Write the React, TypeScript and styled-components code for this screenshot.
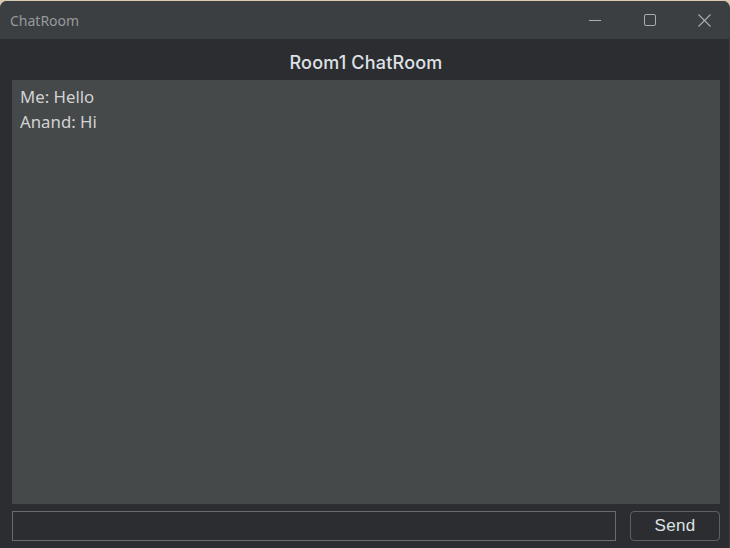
import React from "react";
import styled, { createGlobalStyle } from "styled-components";

const Global = createGlobalStyle`
  html, body { margin: 0; padding: 0; background: #d9c9b1; }
  body { width: 730px; height: 548px; overflow: hidden; }
`;

const Window = styled.div`
  margin-top: 1px;
  width: 730px;
  height: 547px;
  display: flex;
  flex-direction: column;
  background: #2b2d30;
  border-radius: 7px 7px 0 0;
  overflow: hidden;
  box-sizing: border-box;
  border-right: 1px solid #3a3c40;
`;

const TitleBar = styled.div`
  height: 38px;
  flex: 0 0 38px;
  background: #3c3f41;
  display: flex;
  align-items: center;
  padding-left: 10px;
`;

const TitleText = styled.div`
  flex: 1;
  font-family: "Segoe UI", "Noto Sans", "Open Sans", sans-serif;
  font-size: 14px;
  color: #969a9e;
`;

const Controls = styled.div`
  display: flex;
  height: 100%;
  margin-right: -3px;
`;

const CtrlButton = styled.div`
  width: 55px;
  height: 100%;
  display: flex;
  align-items: center;
  justify-content: center;
  color: #a9acb0;
`;

const Body = styled.div`
  flex: 1;
  display: flex;
  flex-direction: column;
  padding: 0 9px 7px 12px;
`;

const Header = styled.div`
  height: 41px;
  display: flex;
  align-items: center;
  justify-content: center;
  font-family: "Inter", "Noto Sans", sans-serif;
  font-weight: 500;
  font-size: 18px;
  letter-spacing: 0.2px;
  color: #dfe1e5;
  padding-top: 6px;
  box-sizing: border-box;
`;

const Messages = styled.div`
  flex: 1;
  background: #45494a;
  padding: 4px 8px;
  font-family: "Segoe UI", "Noto Sans", "Open Sans", sans-serif;
  font-size: 16.8px;
  line-height: 25px;
  color: #d2d2d2;
`;

const Line = styled.div``;

const InputRow = styled.div`
  display: flex;
  gap: 14px;
  margin-top: 7px;
  height: 30px;
`;

const Input = styled.div`
  flex: 1;
  border: 1px solid #6a6b6e;
  background: #2b2d30;
`;

const SendButton = styled.div`
  width: 90px;
  box-sizing: border-box;
  border: 1px solid #5e6064;
  border-radius: 4px;
  display: flex;
  align-items: center;
  justify-content: center;
  font-family: "Liberation Sans", Arial, sans-serif;
  font-size: 17px;
  letter-spacing: 0.3px;
  color: #dfe1e5;
  background: #2b2d30;
`;

export default function App() {
  return (
    <>
      <Global />
      <Window>
        <TitleBar>
          <TitleText>ChatRoom</TitleText>
          <Controls>
            <CtrlButton>
              <svg width="12" height="12" viewBox="0 0 12 12">
                <line x1="0" y1="6.5" x2="12" y2="6.5" stroke="currentColor" strokeWidth="1" />
              </svg>
            </CtrlButton>
            <CtrlButton>
              <svg width="12" height="12" viewBox="0 0 12 12">
                <rect x="0.5" y="0.5" width="11" height="11" rx="1.5" fill="none" stroke="currentColor" strokeWidth="1" />
              </svg>
            </CtrlButton>
            <CtrlButton>
              <svg width="13" height="13" viewBox="0 0 13 13">
                <path d="M0.5 0.5 L12.5 12.5 M12.5 0.5 L0.5 12.5" stroke="currentColor" strokeWidth="1.1" />
              </svg>
            </CtrlButton>
          </Controls>
        </TitleBar>
        <Body>
          <Header>Room1 ChatRoom</Header>
          <Messages>
            <Line>Me: Hello</Line>
            <Line>Anand: Hi</Line>
          </Messages>
          <InputRow>
            <Input />
            <SendButton>Send</SendButton>
          </InputRow>
        </Body>
      </Window>
    </>
  );
}
